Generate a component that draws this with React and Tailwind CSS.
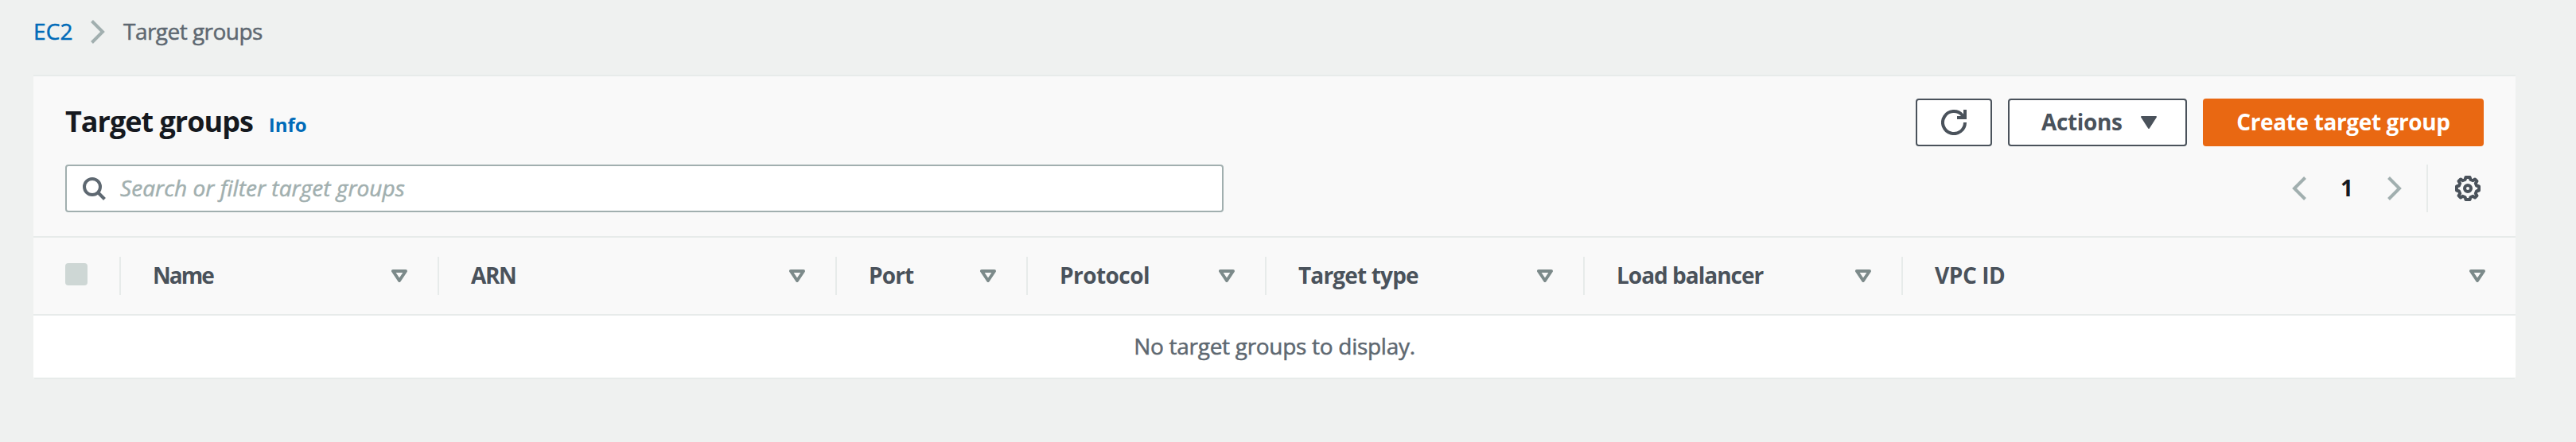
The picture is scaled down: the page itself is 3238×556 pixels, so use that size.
const COLUMNS = [
  { label: "Name", width: "w-[400px]", text: "tracking-[-2px]" },
  { label: "ARN", width: "w-[500px]", text: "tracking-[-1.4px]" },
  { label: "Port", width: "w-[240px]", text: "tracking-[-0.88px]" },
  { label: "Protocol", width: "w-[300px]", text: "tracking-[-0.55px]" },
  { label: "Target type", width: "w-[400px]", text: "tracking-[-0.84px]" },
  { label: "Load balancer", width: "w-[400px]", text: "tracking-[-1px]" },
  { label: "VPC ID", width: "w-[770px]", text: "tracking-[-0.43px]", last: true },
];

function Chevron({ className, left }) {
  return (
    <svg viewBox="0 0 20 32" className={className} fill="none" stroke="currentColor" strokeWidth="4">
      <path d={left ? "M17.5 2.5 L4 16 L17.5 29.5" : "M2.5 2.5 L16 16 L2.5 29.5"} />
    </svg>
  );
}

function SearchIcon() {
  return (
    <svg viewBox="0 0 32 32" className="h-8 w-8 text-[#5e6871]" fill="none" stroke="currentColor" strokeWidth="4">
      <circle cx="14" cy="14" r="10" />
      <path d="M21 21 L29.5 29.5" />
    </svg>
  );
}

function RefreshIcon() {
  return (
    <svg viewBox="0 0 32 32" className="h-8 w-8" fill="none" stroke="currentColor" strokeWidth="4">
      <path d="M30 16 A14 14 0 1 1 26.5 6.8 L29 10" />
      <path d="M30 0 V10 H20" />
    </svg>
  );
}

function GearIcon() {
  return (
    <svg viewBox="0 0 32 32" className="h-8 w-8" fill="none" stroke="currentColor" strokeWidth="4" strokeLinejoin="round">
      <path d="M13.5 2 H18.5 L19.5 5 L22.5 6.2 L25 4.5 L27.5 7 L25.8 9.5 L27 12.5 L30 13.5 V18.5 L27 19.5 L25.8 22.5 L27.5 25 L25 27.5 L22.5 25.8 L19.5 27 L18.5 30 H13.5 L12.5 27 L9.5 25.8 L7 27.5 L4.5 25 L6.2 22.5 L5 19.5 L2 18.5 V13.5 L5 12.5 L6.2 9.5 L4.5 7 L7 4.5 L9.5 6.2 L12.5 5 Z" />
      <circle cx="16" cy="16" r="4" />
    </svg>
  );
}

function SortIcon() {
  return (
    <svg viewBox="0 0 20 16" className="h-4 w-5 text-[#7c8a8a]" fill="none" stroke="currentColor" strokeWidth="4" strokeLinejoin="round">
      <path d="M2 2 H18 L10 14 Z" />
    </svg>
  );
}

export default function App() {
  return (
    <div className="h-[556px] w-[3238px] bg-[#eff1f0] pl-[42px] font-['Open_Sans','Noto_Sans',sans-serif] text-[28px] leading-10 text-[#5e6871]">
      <nav className="flex h-[94px] items-start pt-[19px] [-webkit-text-stroke:0.5px_currentColor]">
        <a className="w-[71px] tracking-[0.1px] text-[#006bb8]">EC2</a>
        <Chevron className="mt-[5px] h-8 w-5 text-[#a1afaf]" />
        <span className="ml-[22px] tracking-[-0.53px]">Target groups</span>
      </nav>

      <main className="w-[3120px] border-t-2 border-[#e7ebea] bg-[#f9f9f9]">
        <header className="flex h-[88px] items-end justify-between pl-10 pr-10">
          <div className="flex h-[60px] items-baseline">
            <h1 className="text-[36px] font-bold leading-[58px] tracking-[-1px] text-[#16191f]">Target groups</h1>
            <a className="ml-5 text-[24px] font-bold text-[#006bb8]">Info</a>
          </div>
          <div className="flex gap-5 font-bold text-[#4a525b]">
            <button className="flex h-[60px] w-24 items-center justify-center rounded border-2 border-[#4a525b] bg-white">
              <RefreshIcon />
            </button>
            <button className="flex h-[60px] w-[225px] items-center rounded border-2 border-[#4a525b] bg-white pl-10">
              <span className="w-[125px] pb-[2px] text-left tracking-[-0.36px]">Actions</span>
              <svg viewBox="0 0 20 16" className="h-4 w-5" fill="currentColor" stroke="currentColor" strokeWidth="2" strokeLinejoin="round">
                <path d="M1 1 H19 L10 15 Z" />
              </svg>
            </button>
            <button className="h-[60px] w-[353px] rounded bg-[#e96812] pb-[2px] tracking-[-0.38px] text-white">Create target group</button>
          </div>
        </header>

        <div className="flex h-[113px] items-start justify-between px-10 pt-[23px]">
          <div className="flex h-[60px] w-[1456px] items-center rounded border-2 border-[#a1afaf] bg-white pl-[18px]">
            <SearchIcon />
            <span className="ml-[17px] pb-[2px] italic tracking-[0.05px] text-[#a1afaf] [-webkit-text-stroke:0.5px_currentColor]">Search or filter target groups</span>
          </div>
          <div className="flex h-[60px] items-center">
            <Chevron left className="h-8 w-5 text-[#a1afaf]" />
            <span className="w-[100px] pb-[2px] text-center font-bold text-[#16191f]">1</span>
            <Chevron className="h-8 w-5 text-[#a1afaf]" />
            <div className="ml-[30px] mr-[34px] h-[60px] w-[2px] bg-[#e7ebea]" />
            <div className="mr-1 text-[#4a525b]">
              <GearIcon />
            </div>
          </div>
        </div>

        <div className="flex h-[100px] items-center border-y-2 border-[#e7ebea]">
          <div className="flex h-12 w-[110px] items-center border-r-2 border-[#e7ebea] pb-1 pl-10">
            <div className="h-7 w-7 rounded bg-[#ced7d5]" />
          </div>
          {COLUMNS.map((c) => (
            <div
              key={c.label}
              className={`flex h-12 items-center justify-between pl-10 ${c.width} ${c.last ? "pr-[38px]" : "border-r-2 border-[#e7ebea] pr-[38px]"}`}
            >
              <span className={`pb-[2px] font-bold text-[#4a525b] ${c.text}`}>{c.label}</span>
              <SortIcon />
            </div>
          ))}
        </div>

        <div className="h-[80px] rounded-b-[2px] border-b-2 border-[#e7ebea] bg-white pt-[18px] text-center tracking-[-0.29px] [-webkit-text-stroke:0.5px_currentColor]">
          No target groups to display.
        </div>
      </main>
    </div>
  );
}
